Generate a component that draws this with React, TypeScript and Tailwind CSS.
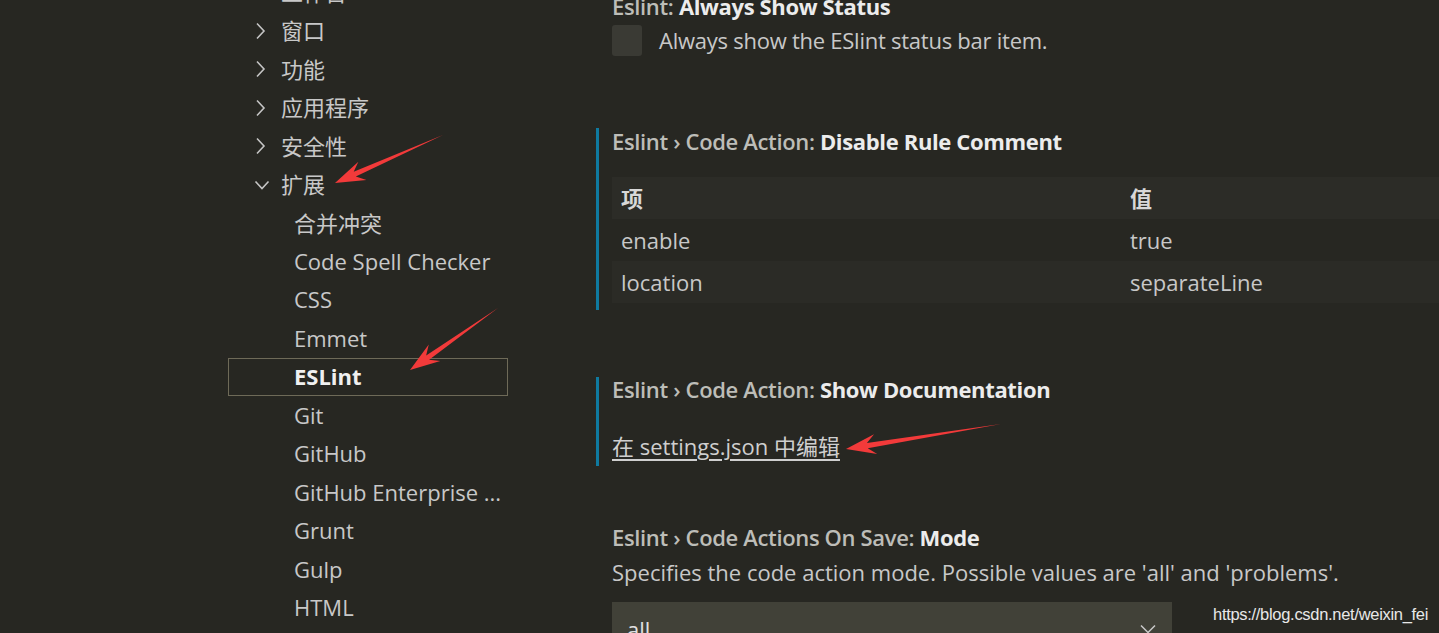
import React from "react";

const font = {
  fontFamily: '"Open Sans", "Noto Sans CJK SC", sans-serif',
};

type TreeItem = { label: string; level: 0 | 1; open?: boolean; selected?: boolean };

const treeItems: TreeItem[] = [
  { label: "工作台", level: 0 },
  { label: "窗口", level: 0 },
  { label: "功能", level: 0 },
  { label: "应用程序", level: 0 },
  { label: "安全性", level: 0 },
  { label: "扩展", level: 0, open: true },
  { label: "合并冲突", level: 1 },
  { label: "Code Spell Checker", level: 1 },
  { label: "CSS", level: 1 },
  { label: "Emmet", level: 1 },
  { label: "ESLint", level: 1, selected: true },
  { label: "Git", level: 1 },
  { label: "GitHub", level: 1 },
  { label: "GitHub Enterprise ...", level: 1 },
  { label: "Grunt", level: 1 },
  { label: "Gulp", level: 1 },
  { label: "HTML", level: 1 },
];

function Chevron({ open }: { open?: boolean }) {
  return (
    <svg width="16" height="20" viewBox="0 0 16 20" className="shrink-0">
      {open ? (
        <polyline points="1.5,6.5 8,13.5 14.5,6.5" fill="none" stroke="#c5c5c5" strokeWidth="1.6" />
      ) : (
        <polyline points="3,2.5 10,10 3,17.5" fill="none" stroke="#c5c5c5" strokeWidth="1.6" />
      )}
    </svg>
  );
}

// red annotation arrow, tail -> tip
function arrowPoints(tx: number, ty: number, hx: number, hy: number) {
  const dx = hx - tx;
  const dy = hy - ty;
  const len = Math.hypot(dx, dy);
  const ux = dx / len;
  const uy = dy / len;
  const nx = -uy;
  const ny = ux;
  const L = 30;
  const W = 10;
  const joinX = hx - ux * L * 0.72;
  const joinY = hy - uy * L * 0.72;
  const barbX = hx - ux * L;
  const barbY = hy - uy * L;
  const sw = 2.6;
  const pts = [
    [tx, ty],
    [joinX + nx * sw, joinY + ny * sw],
    [barbX + nx * W, barbY + ny * W],
    [hx, hy],
    [barbX - nx * W, barbY - ny * W],
    [joinX - nx * sw, joinY - ny * sw],
  ];
  return pts.map((p) => p.join(",")).join(" ");
}

function SettingTitle({ prefix, name }: { prefix: string; name: string }) {
  return (
    <div className="text-[22px] leading-[24px] font-semibold tracking-[-0.35px] text-[#bdbdb8] whitespace-nowrap">
      {prefix}
      <span className="text-[#ececec] font-bold">{name}</span>
    </div>
  );
}

export default function App() {
  return (
    <div
      className="relative w-[1439px] h-[633px] overflow-hidden bg-[#272722] flex"
      style={font}
    >
      {/* left tree */}
      <div className="w-[228px] shrink-0" />
      <div className="w-[280px] shrink-0 mt-[-27px] flex flex-col">
        {treeItems.map((item) => (
          <div
            key={item.label}
            className={`h-[38.47px] shrink-0 flex items-center text-[22px] whitespace-nowrap ${
              item.selected
                ? "border border-[#6e6a58] font-bold text-[#f0f0f0]"
                : "border border-transparent text-[#c8c8c8]"
            }`}
          >
            {item.level === 0 ? (
              <div className="flex items-center pl-[25px] gap-[11px]">
                <Chevron open={item.open} />
                <span>{item.label}</span>
              </div>
            ) : (
              <span className="pl-[65px]">{item.label}</span>
            )}
          </div>
        ))}
      </div>

      {/* right settings pane */}
      <div className="ml-[88px] flex-1 flex flex-col">
        {/* Always show status */}
        <div className="pl-[13px] border-l-[3px] border-transparent mt-[-6px]">
          <SettingTitle prefix="Eslint: " name="Always Show Status" />
          <div className="flex items-center gap-[17px] mt-[7px] h-[31px]">
            <div className="w-[30px] h-[31px] rounded-[3px] bg-[#3a3a34]" />
            <span className="text-[22px] tracking-[-0.25px] text-[#c8c8c8]">
              Always show the ESlint status bar item.
            </span>
          </div>
        </div>

        {/* Disable rule comment */}
        <div className="mt-[72px] pl-[13px] border-l-[3px] border-[#0f7aa0] pb-[7px] pt-[1px]">
          <SettingTitle prefix="Eslint › Code Action: " name="Disable Rule Comment" />
          <div className="mt-[24px] text-[22px] text-[#c8c8c8]">
            <div className="h-[42px] flex items-center bg-[#2c2c27] font-bold text-[#d8d8d8]">
              <span className="w-[518px] pl-[9px]">项</span>
              <span>值</span>
            </div>
            <div className="h-[42px] flex items-center">
              <span className="w-[518px] pl-[9px]">enable</span>
              <span>true</span>
            </div>
            <div className="h-[42px] flex items-center bg-[#2b2b26]">
              <span className="w-[518px] pl-[9px]">location</span>
              <span>separateLine</span>
            </div>
          </div>
        </div>

        {/* Show documentation */}
        <div className="mt-[67px] pl-[13px] border-l-[3px] border-[#0f7aa0] pb-[5px]">
          <SettingTitle prefix="Eslint › Code Action: " name="Show Documentation" />
          <a className="block mt-[30px] text-[22px] leading-[30px] text-[#cfcfcf] underline underline-offset-[4px] w-fit">
            在 settings.json 中编辑
          </a>
        </div>

        {/* Code actions on save mode */}
        <div className="mt-[59px] pl-[13px] border-l-[3px] border-transparent">
          <SettingTitle prefix="Eslint › Code Actions On Save: " name="Mode" />
          <div className="mt-[8px] text-[22px] leading-[30px] text-[#c8c8c8] whitespace-nowrap">
            Specifies the code action mode. Possible values are 'all' and 'problems'.
          </div>
          <div className="mt-[15px] w-[560px] h-[40px] bg-[#414138] flex items-center justify-between pl-[15px] pr-[16px] pt-[14px]">
            <span className="text-[22px] text-[#e0e0e0]">all</span>
            <svg width="16" height="10" viewBox="0 0 16 10">
              <polyline points="1,1.5 8,8.5 15,1.5" fill="none" stroke="#c8c8c8" strokeWidth="1.5" />
            </svg>
          </div>
        </div>
      </div>

      {/* watermark */}
      <div
        className="absolute left-[1213px] top-[602px] text-[16.5px] text-[#e8e8e8] tracking-[-0.3px]"
        style={{ fontFamily: '"Liberation Sans Narrow", "Liberation Sans", sans-serif' }}
      >
        https://blog.csdn.net/weixin_fei
      </div>

      {/* annotation arrows */}
      <svg className="absolute inset-0 pointer-events-none" width="1439" height="633">
        <polygon points={arrowPoints(443, 135, 335, 183)} fill="#f23a3a" />
        <polygon points={arrowPoints(498, 308, 410, 370)} fill="#f23a3a" />
        <polygon points={arrowPoints(1001, 424, 846, 449)} fill="#f23a3a" />
      </svg>
    </div>
  );
}
